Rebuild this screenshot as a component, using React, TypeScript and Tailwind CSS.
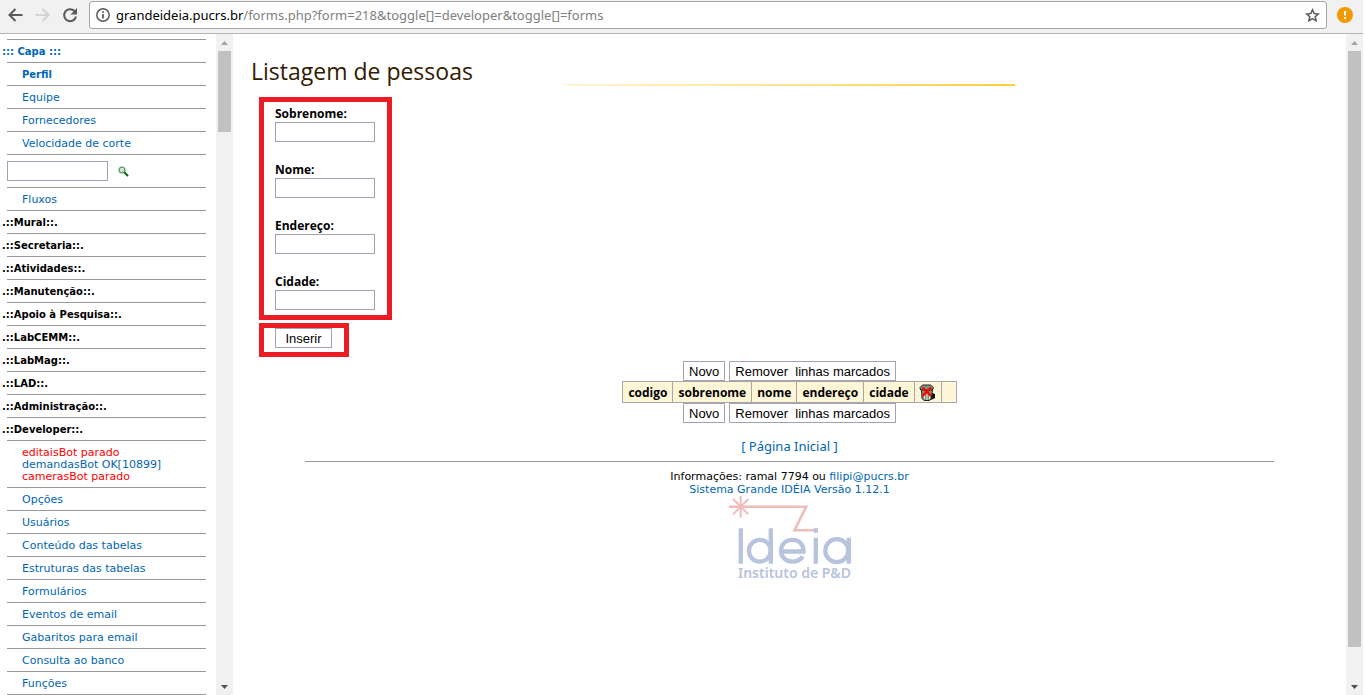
import React from "react";

type Item = { kind: "link" | "bold" | "group" | "home"; text: string };

const topItems: Item[] = [
  { kind: "home", text: "::: Capa :::" },
  { kind: "bold", text: "Perfil" },
  { kind: "link", text: "Equipe" },
  { kind: "link", text: "Fornecedores" },
  { kind: "link", text: "Velocidade de corte" },
];

const middleItems: Item[] = [
  { kind: "link", text: "Fluxos" },
  { kind: "group", text: ".::Mural::." },
  { kind: "group", text: ".::Secretaria::." },
  { kind: "group", text: ".::Atividades::." },
  { kind: "group", text: ".::Manutenção::." },
  { kind: "group", text: ".::Apoio à Pesquisa::." },
  { kind: "group", text: ".::LabCEMM::." },
  { kind: "group", text: ".::LabMag::." },
  { kind: "group", text: ".::LAD::." },
  { kind: "group", text: ".::Administração::." },
  { kind: "group", text: ".::Developer::." },
];

const bottomItems: Item[] = [
  "Opções",
  "Usuários",
  "Conteúdo das tabelas",
  "Estruturas das tabelas",
  "Formulários",
  "Eventos de email",
  "Gabaritos para email",
  "Consulta ao banco",
  "Funções",
].map((text) => ({ kind: "link", text }));

const itemClass = {
  link: "pl-[22px] text-[11px] text-[#0066b3]",
  bold: "pl-[22px] text-[10px] font-bold text-[#0066b3]",
  home: "pl-[2px] text-[10px] font-bold text-[#0066b3]",
  group: "pl-[2px] text-[10px] font-bold text-black",
};

function Rule() {
  return <hr className="mr-[10px] ml-[7px] border-t border-[#999999]" />;
}

function MenuItem({ item }: { item: Item }) {
  return (
    <li>
      <Rule />
      <a href="#" className={`block h-[22px] pt-px leading-[22px] whitespace-nowrap ${itemClass[item.kind]}`}>
        {item.text}
      </a>
    </li>
  );
}

function ScrollBar({ thumb }: { thumb: string }) {
  return (
    <div className="flex w-[17px] shrink-0 flex-col items-center bg-[#f1f1f1]" aria-hidden="true">
      <svg className="h-[17px] w-[17px] shrink-0" viewBox="0 0 17 17">
        <path d="M5 11 L8.5 7 L12 11 Z" fill="#a3a3a3" />
      </svg>
      <div className="flex w-[13px] flex-1 flex-col">
        <div className={`bg-[#c1c1c1] ${thumb}`} />
      </div>
      <svg className="h-[17px] w-[17px] shrink-0" viewBox="0 0 17 17">
        <path d="M5 7 L12 7 L8.5 11 Z" fill="#505050" />
      </svg>
    </div>
  );
}

function BrowserBar() {
  return (
    <header className="flex h-[34px] shrink-0 items-center border-b border-[#b6b4b6] bg-[#f2f1f2] pt-px pr-[10px] pb-1 pl-2">
      <button aria-label="Voltar" className="mr-3">
        <svg width="15" height="14" viewBox="0 0 15 14" fill="none" stroke="#5a5a5a" strokeWidth="2">
          <path d="M14.500 7H1.500M7.500 1L1.500 7l6 6" />
        </svg>
      </button>
      <button aria-label="Avançar" className="mr-3">
        <svg width="15" height="14" viewBox="0 0 15 14" fill="none" stroke="#d2d2d2" strokeWidth="2">
          <path d="M.5 7h13M7.500 1l6 6-6 6" />
        </svg>
      </button>
      <button aria-label="Recarregar" className="mr-[11px]">
        <svg width="16" height="16" viewBox="0 0 16 16">
          <path d="M14 9.500A6 6 0 1 1 12.500 4" fill="none" stroke="#5a5a5a" strokeWidth="2" />
          <path d="M15 1v6.500H8.500z" fill="#5a5a5a" />
        </svg>
      </button>
      <div className="flex h-7 flex-1 items-center rounded-[3px] border border-[#a8a6a8] bg-white px-[6px]">
        <svg className="mr-[6px] shrink-0" width="14" height="14" viewBox="0 0 14 14">
          <circle cx="7" cy="7" r="6.200" fill="none" stroke="#5a5a5a" strokeWidth="1.500" />
          <path d="M7 6v4.500M7 3.200v1.700" stroke="#5a5a5a" strokeWidth="1.700" />
        </svg>
        <p className="flex-1 font-['Noto_Sans',sans-serif] text-[13px] leading-5 whitespace-nowrap text-[#808080]">
          <span className="text-black">grandeideia.pucrs.br</span>
          /forms.php?form=218&amp;toggle[]=developer&amp;toggle[]=forms
        </p>
        <svg width="15" height="15" viewBox="0 0 15 15" fill="none" stroke="#5a5a5a" strokeWidth="1.500">
          <path d="M7.500 1.800l1.700 3.800 4.100.4-3.100 2.700.9 4.100-3.600-2.200-3.600 2.200.9-4.100L1.700 6l4.100-.4z" />
        </svg>
      </div>
      <svg className="ml-[10px]" width="16" height="16" viewBox="0 0 16 16">
        <circle cx="8" cy="8" r="8" fill="#f29900" />
        <path d="M8 4v4.500M8 10v2" stroke="#fff" strokeWidth="2" />
      </svg>
    </header>
  );
}

function Sidebar() {
  return (
    <nav className="w-[216px] shrink-0 overflow-hidden pt-[5px] font-['DejaVu_Sans',sans-serif]">
      <ul>
        {topItems.map((i) => (
          <MenuItem key={i.text} item={i} />
        ))}
        <li>
          <Rule />
          <form className="flex h-8 items-center gap-[10px] pl-[7px]">
            <input aria-label="Buscar" className="h-5 w-[101px] border border-[#a3a2b3] px-1 text-[11px]" />
            <button type="button" aria-label="Buscar">
              <svg width="11" height="11" viewBox="0 0 11 11">
                <path d="M6 6l4 4" stroke="#0a640a" strokeWidth="2" />
                <circle cx="4" cy="4" r="3" fill="#c2e0cc" stroke="#4a9058" strokeWidth="1.200" />
                <path d="M2.500 4.500l2-2" stroke="#fff" />
              </svg>
            </button>
          </form>
        </li>
        {middleItems.map((i) => (
          <MenuItem key={i.text} item={i} />
        ))}
        <li>
          <Rule />
          <div className="pt-[6px] pb-1 pl-[22px] text-[11px] leading-3 text-[#ff0000]">
            <p>editaisBot parado</p>
            <p className="text-[#0066b3]">demandasBot OK[10899]</p>
            <p>camerasBot parado</p>
          </div>
        </li>
        {bottomItems.map((i) => (
          <MenuItem key={i.text} item={i} />
        ))}
      </ul>
      <Rule />
    </nav>
  );
}

function PlainButton({ children }: { children: React.ReactNode }) {
  return (
    <button
      type="button"
      className="h-5 border border-[#a3a2b3] bg-white px-[5px] pt-px font-['Liberation_Sans',sans-serif] text-[13px] leading-[18px] whitespace-pre"
    >
      {children}
    </button>
  );
}

function RowActions() {
  return (
    <div className="flex justify-center gap-1">
      <PlainButton>Novo</PlainButton>
      <PlainButton>{"Remover  linhas marcados"}</PlainButton>
    </div>
  );
}

function TrashIcon() {
  return (
    <svg width="17" height="17" viewBox="0 0 17 17" role="img" aria-label="Excluir">
      <path d="M11 8l5 2v4l-4 2z" fill="#111" />
      <path d="M2.500 5h11l-1 9.500-2 2H5l-2-2z" fill="#7f937d" stroke="#222" />
      <path d="M5.500 9v6M8 9v7M10.500 9v6" stroke="#e3e8dc" />
      <path d="M1 3.500L3.500 1h8L14.500 3.500 13.500 6h-12z" fill="#7f937d" stroke="#222" />
      <path d="M3.500 3.500L12 12M12 3.500L3.500 12" stroke="#ff0000" strokeWidth="2.400" />
    </svg>
  );
}

function Logo() {
  return (
    <svg width="124" height="88" viewBox="0 0 124 88" role="img" aria-label="Ideia Instituto de P&D">
      <g fill="none" stroke="#efbcbc" strokeWidth="2.600">
        <path d="M1 10.700H78.200L66.500 34.300H86" />
        <path d="M12.700 0v21.700M5 3l15.400 15.400M20.400 3L5 18.400" strokeWidth="2" />
      </g>
      <g fill="none" stroke="#b8c3dd" strokeWidth="4.300">
        <path d="M12.800 32.300v35.400M42.800 32.300v35.400M87.800 41.700v26M87.800 32.300v4.400M120.800 41.700v26" />
        <circle cx="31.800" cy="54.700" r="10.900" />
        <path d="M53.500 55.500H75.500C75.500 47.500 70.500 43.800 64.300 43.800S53 48 53 54.700S58 65.600 64.500 65.600C69 65.600 72.500 64 74.800 60.500" />
        <circle cx="108.800" cy="54.700" r="11.500" />
      </g>
      <text
        x="10"
        y="82"
        fill="#b8c3dd"
        className="font-['Noto_Sans',sans-serif] text-[14px] font-semibold"
      >
        Instituto de P&amp;D
      </text>
    </svg>
  );
}

const fields = ["Sobrenome", "Nome", "Endereço", "Cidade"];
const columns = ["codigo", "sobrenome", "nome", "endereço", "cidade"];

function Main() {
  return (
    <main className="min-w-0 flex-1 overflow-hidden pt-[21px] text-black">
      <div className="grid grid-cols-[1fr_450px_1fr]">
        <h1 className="pl-[18px] font-['Open_Sans',sans-serif] text-[23px] leading-8 whitespace-nowrap text-[#331a00]">
          Listagem de pessoas
        </h1>
        <div className="mt-[29px] h-[2px] bg-linear-to-r from-[#fff5d0] to-[#ffcf33]" />
      </div>

      <form className="mt-[10px] flex flex-col items-start gap-[3px] pl-[26px]">
        <div className="flex w-[133px] flex-col gap-5 border-[5px] border-[#ed1c24] px-[11px] pt-1 pb-[5px]">
          {fields.map((f) => (
            <div key={f} className="flex flex-col">
              <label htmlFor={f} className="h-4 font-['Open_Sans',sans-serif] text-[12px] leading-4 font-bold">
                {f}:
              </label>
              <input id={f} className="h-5 w-[100px] border border-[#a3a2b3] px-1 text-[13px]" />
            </div>
          ))}
        </div>
        <div className="flex h-[34px] w-[90px] items-start border-[5px] border-[#ed1c24] px-[11px]">
          <button
            type="button"
            className="h-5 w-[57px] border border-[#a3a2b3] bg-white pt-px font-['Liberation_Sans',sans-serif] text-[13px] leading-[18px]"
          >
            Inserir
          </button>
        </div>
      </form>

      <section className="mt-1 flex flex-col items-center">
        <RowActions />
        <table className="border-collapse bg-[#fff5d7] font-['Open_Sans',sans-serif] text-[12px] leading-[19px]">
          <thead>
            <tr className="h-[21px]">
              {columns.map((c) => (
                <th key={c} className="border border-[#a8a6a8] px-[5px] py-0 font-bold">
                  {c}
                </th>
              ))}
              <th className="w-[27px] border border-[#a8a6a8] p-0">
                <span className="flex justify-center">
                  <TrashIcon />
                </span>
              </th>
              <th className="w-[15px] border border-[#a8a6a8] p-0" />
            </tr>
          </thead>
        </table>
        <RowActions />
      </section>

      <footer className="mt-[13px] flex flex-col items-center font-['DejaVu_Sans',sans-serif] text-[11px] leading-[13px]">
        <a href="#" className="font-['Noto_Sans',sans-serif] text-[13px] leading-5 text-[#0066b3]">
          [ Página Inicial ]
        </a>
        <hr className="mt-[5px] mb-2 w-[87%] border-t border-[#999999]" />
        <p>
          Informações: ramal 7794 ou{" "}
          <a href="mailto:filipi@pucrs.br" className="text-[#0066b3]">
            filipi@pucrs.br
          </a>
        </p>
        <a href="#" className="text-[#0066b3]">
          Sistema Grande IDÉIA Versão 1.12.1
        </a>
        <Logo />
      </footer>
    </main>
  );
}

export default function App() {
  return (
    <div className="flex h-screen flex-col overflow-hidden bg-white pr-[2px]">
      <BrowserBar />
      <div className="flex min-h-0 flex-1">
        <Sidebar />
        <ScrollBar thumb="h-[81px]" />
        <Main />
        <ScrollBar thumb="h-[95%]" />
      </div>
    </div>
  );
}
